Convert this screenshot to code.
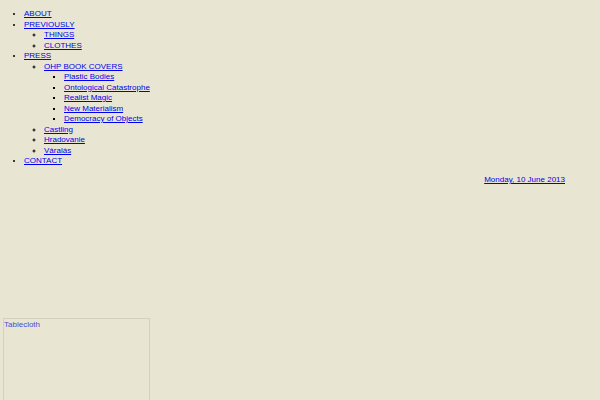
import React from "react";

const A = ({ children }: { children: React.ReactNode }) => (
  <a href="#" className="text-[#0000ee] underline">{children}</a>
);

export default function App() {
  return (
    <div className="h-[400px] w-[600px] overflow-hidden bg-[#e8e6d3] text-[8px] leading-[10.5px] text-black" style={{ fontFamily: '"Liberation Sans", Arial, sans-serif' }}>
      <ul className="list-disc pl-[24px] pt-[9px]">
        <li><A>ABOUT</A></li>
        <li>
          <A>PREVIOUSLY</A>
          <ul className="list-[circle] pl-[20px]">
            <li><A>THINGS</A></li>
            <li><A>CLOTHES</A></li>
          </ul>
        </li>
        <li>
          <A>PRESS</A>
          <ul className="list-[circle] pl-[20px]">
            <li>
              <A>OHP BOOK COVERS</A>
              <ul className="list-[square] pl-[20px]">
                <li><A>Plastic Bodies</A></li>
                <li><A>Ontological Catastrophe</A></li>
                <li><A>Realist Magic</A></li>
                <li><A>New Materialism</A></li>
                <li><A>Democracy of Objects</A></li>
              </ul>
            </li>
            <li><A>Castling</A></li>
            <li><A>Hradovanie</A></li>
            <li><A>Váralás</A></li>
          </ul>
        </li>
        <li><A>CONTACT</A></li>
      </ul>
      <div className="mt-[8.5px] pr-[35px] text-right">
        <A>Monday, 10 June 2013</A>
      </div>
      <div className="ml-[3px] mt-[132px] h-[90px] w-[147px] border border-[#d2d0bf] pt-[1px] text-[#4a4ad6]">
        Tablecloth
      </div>
    </div>
  );
}
